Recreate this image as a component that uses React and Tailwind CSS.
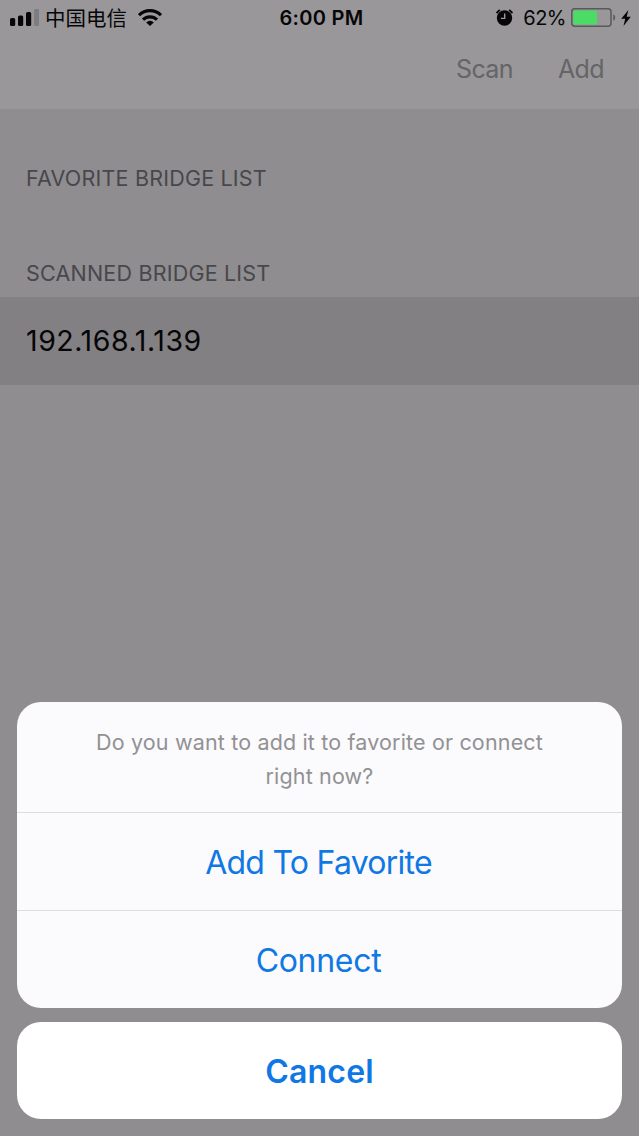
const signalBars = [
  { x: 0, y: 9, height: 8 },
  { x: 8, y: 6.5, height: 10.5 },
  { x: 16, y: 3, height: 14 },
  { x: 24, y: 0, height: 17, faded: true },
];

function SignalIcon() {
  return (
    <svg width="29" height="17" viewBox="0 0 29 17" className="shrink-0">
      {signalBars.map((bar) => (
        <rect
          key={bar.x}
          x={bar.x}
          y={bar.y}
          width="5.2"
          height={bar.height}
          rx="1.6"
          fill={bar.faded ? '#7d7c7f' : '#060607'}
        />
      ))}
    </svg>
  );
}

function WifiIcon() {
  return (
    <svg width="24" height="17" viewBox="0 0 24 17" fill="none" stroke="#060607" strokeWidth="3.2" className="shrink-0">
      <path d="M1 6.2a15.6 15.6 0 0 1 22 0" />
      <path d="M5 10.7a9.9 9.9 0 0 1 14 0" />
      <path d="M8.2 13.4a5.4 5.4 0 0 1 7.6 0L12 17z" fill="#060607" stroke="none" />
    </svg>
  );
}

function AlarmIcon() {
  return (
    <svg width="17" height="17" viewBox="0 0 17 17" fill="none" className="shrink-0">
      <circle cx="8.5" cy="9" r="7.7" fill="#060607" />
      <path d="M.6 4 3.8.9M16.4 4 13.2.9" stroke="#060607" strokeWidth="1.8" />
      <path d="M8.7 4.6v4.8H4.8" stroke="#99979a" strokeWidth="1.4" />
    </svg>
  );
}

function BatteryIcon() {
  return (
    <svg width="45" height="19" viewBox="0 0 45 19" className="shrink-0">
      <rect x=".8" y=".8" width="39.2" height="17.4" rx="3" fill="none" stroke="#59585b" strokeWidth="1.5" />
      <path d="M4 2.5h22v14H4a1.6 1.6 0 0 1-1.6-1.6V4.1A1.6 1.6 0 0 1 4 2.5z" fill="#4bdc65" />
      <path d="M42.3 6.3c2.5.9 2.5 5.5 0 6.4z" fill="#59585b" />
    </svg>
  );
}

function BoltIcon() {
  return (
    <svg width="10" height="16" viewBox="0 0 10 16" fill="#060607" className="block shrink-0">
      <path d="M7.4 0 .2 8.8h4L2.5 16 9.8 6.7H5.7z" />
    </svg>
  );
}

function StatusBar() {
  return (
    <div className="grid h-[35px] grid-cols-[1fr_auto_1fr] items-center pr-2 pl-2.5 text-[#060607]">
      <div className="flex items-center">
        <SignalIcon />
        <span className="mr-[11px] ml-[6px] pt-[3px] text-[20.5px] leading-none">中国电信</span>
        <WifiIcon />
      </div>
      <span className="pl-0.5 text-[20px] leading-none font-semibold tracking-[0.3px]">6:00 PM</span>
      <div className="flex items-center justify-end">
        <AlarmIcon />
        <span className="mr-[5px] ml-2.5 text-[20px] leading-none tracking-[-0.5px]">62%</span>
        <BatteryIcon />
        <span className="ml-[5px]">
          <BoltIcon />
        </span>
      </div>
    </div>
  );
}

function SectionTitle({ children }) {
  return <h2 className="pl-[26px] text-[21.5px] leading-[26px] tracking-[0.2px] text-[#48474b]">{children}</h2>;
}

function ActionSheet() {
  return (
    <div className="absolute inset-x-[17px] bottom-[17px] flex flex-col gap-3.5 text-center text-[#0f78e4]">
      <div className="overflow-hidden rounded-[24px] bg-[#fbfafc]">
        <p className="h-[110px] px-16 pt-[23px] text-[21.5px] leading-[34px] tracking-[0.16px] text-[#929194]">
          Do you want to add it to favorite or connect
          <br />
          right now?
        </p>
        <button className="block h-[98px] w-full border-t border-[#dddcde] pt-0.5 pr-0.5 text-[32px] tracking-[-0.75px]">
          Add To Favorite
        </button>
        <button className="block h-[98px] w-full border-t border-[#dddcde] pt-0.5 pr-0.5 text-[32px] tracking-[-0.3px]">
          Connect
        </button>
      </div>
      <button className="h-[97px] rounded-[24px] bg-white pt-0.5 text-[32px] font-semibold tracking-[0.2px]">
        Cancel
      </button>
    </div>
  );
}

export default function App() {
  return (
    <div className="relative h-[1136px] w-[639px] overflow-hidden bg-[#8f8d90] font-['Inter','Noto_Sans_CJK_SC',sans-serif]">
      <header className="h-[109px] bg-[#99979a]">
        <StatusBar />
        <nav className="flex h-[69px] items-center justify-end gap-[45px] pr-[35px] text-[25px] tracking-[-0.6px] text-[#656467]">
          <button>Scan</button>
          <button>Add</button>
        </nav>
      </header>
      <main className="pt-14">
        <SectionTitle>FAVORITE BRIDGE LIST</SectionTitle>
        <div className="mt-[69px]">
          <SectionTitle>SCANNED BRIDGE LIST</SectionTitle>
        </div>
        <div className="mt-[11px] flex h-[88px] items-center bg-[#828083] pl-[26px] text-[28.5px] tracking-[0.55px] text-[#060607]">
          192.168.1.139
        </div>
      </main>
      <ActionSheet />
    </div>
  );
}
